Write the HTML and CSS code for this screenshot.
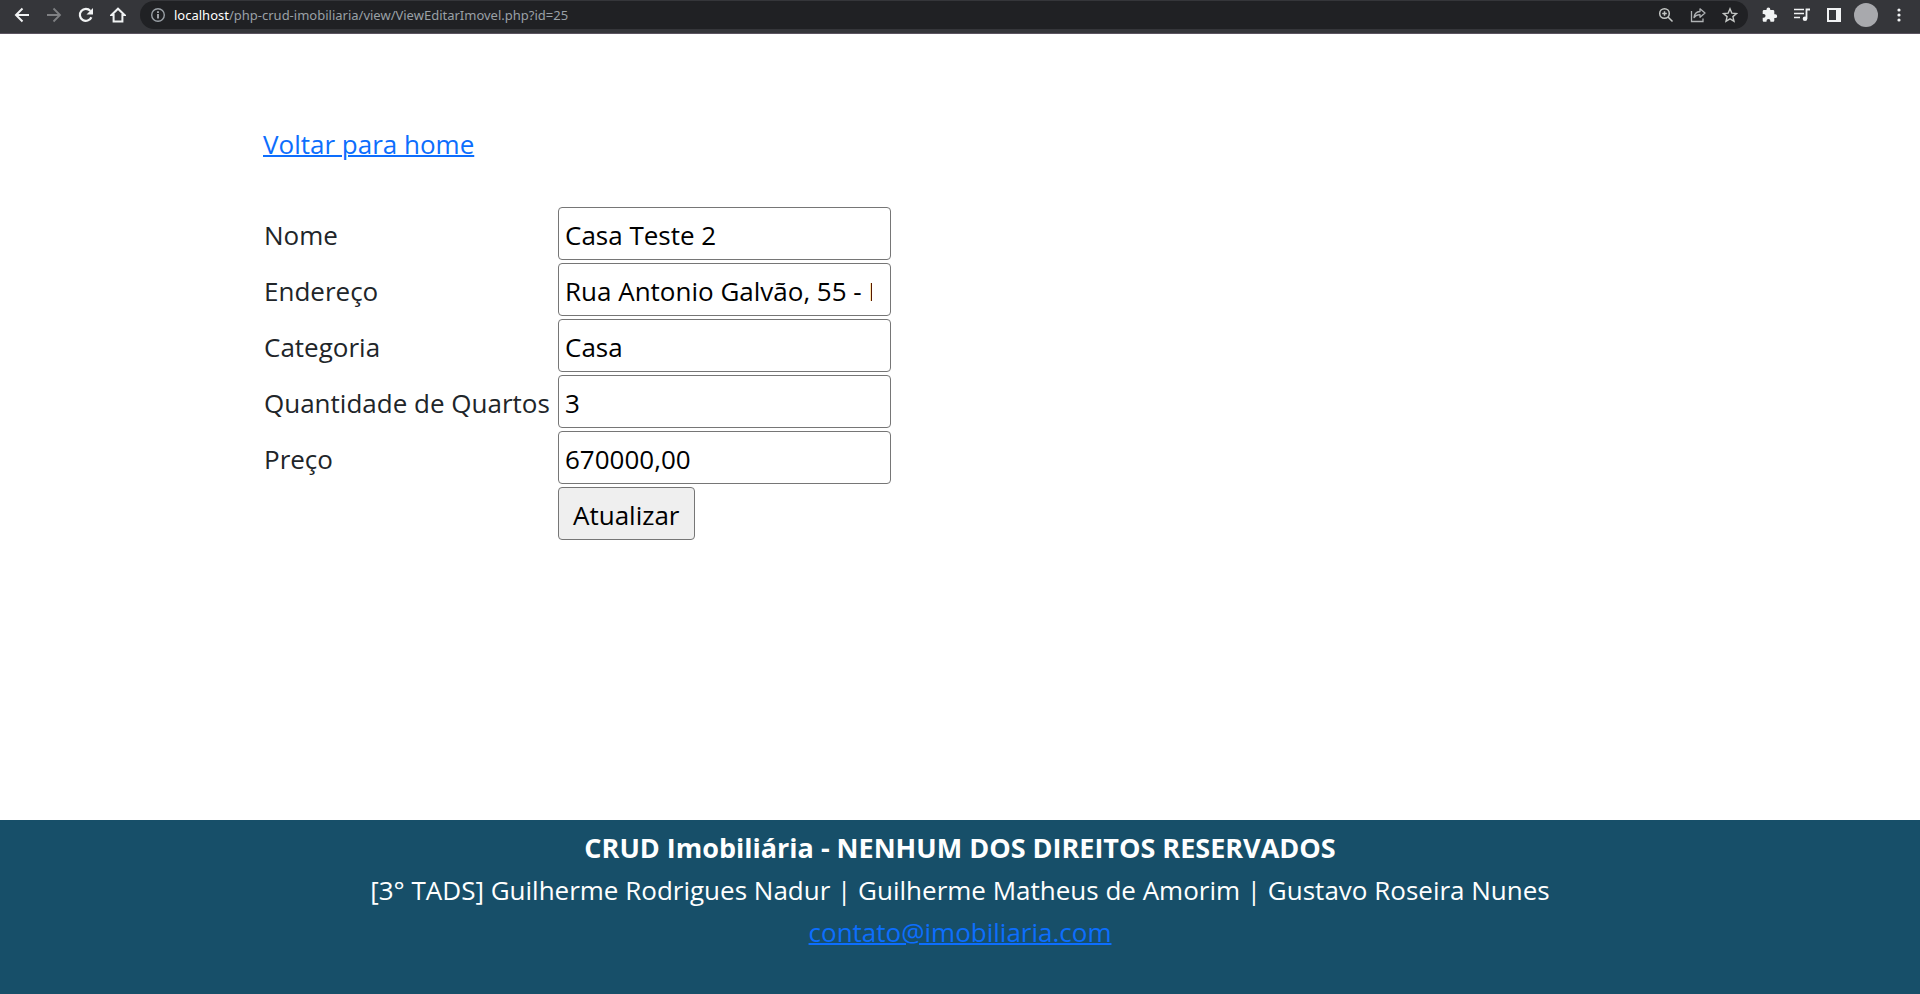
FILE: index.html
```html
<!DOCTYPE html>
<html lang="pt-br">
<head>
<meta charset="utf-8">
<title>Editar Imóvel</title>
<link rel="stylesheet" href="styles.css">
</head>
<body>
<header class="toolbar">
  <nav class="nav-buttons" aria-label="Navegação">
    <button class="tool" type="button" aria-label="Voltar"><svg viewBox="0 0 16 16"><path d="M15 8H2M8.500 1.500L2 8l6.500 6.500" fill="none" stroke="#f1f3f4" stroke-width="2"/></svg></button>
    <button class="tool" type="button" aria-label="Avançar"><svg viewBox="0 0 16 16"><path d="M1 8h13M7.500 1.500L14 8l-6.500 6.500" fill="none" stroke="#7f8083" stroke-width="1.800"/></svg></button>
    <button class="tool" type="button" aria-label="Recarregar"><svg viewBox="0 0 16 16"><path d="M13.400 10.200A6 6 0 1 1 12.400 3.900" fill="none" stroke="#f1f3f4" stroke-width="2.200"/><path d="M15 1v6.500H8.500z" fill="#f1f3f4"/></svg></button>
    <button class="tool" type="button" aria-label="Página inicial"><svg viewBox="0 0 16 16"><path d="M1.500 8L8 1.700 14.500 8H12.400v6.500H3.600V8z" fill="none" stroke="#f1f3f4" stroke-width="2"/></svg></button>
  </nav>
  <div class="address">
    <svg class="info" viewBox="0 0 16 16"><circle cx="8" cy="8" r="6.300" fill="none" stroke="#9aa0a6" stroke-width="1.400"/><path d="M7.200 7h1.600v4.500H7.200zM7.200 4.300h1.600v1.600H7.200z" fill="#bdc1c6"/></svg>
    <span class="url"><span class="host">localhost</span>/php-crud-imobiliaria/view/ViewEditarImovel.php?id=25</span>
    <button class="tool" type="button" aria-label="Zoom"><svg viewBox="0 0 16 16"><circle cx="6.500" cy="6.500" r="4.800" fill="none" stroke="#c4c7c5" stroke-width="1.500"/><path d="M10 10l4.500 4.500M4.200 6.500h4.600M6.500 4.200v4.600" fill="none" stroke="#c4c7c5" stroke-width="1.500"/></svg></button>
    <button class="tool" type="button" aria-label="Compartilhar"><svg viewBox="0 0 16 16"><path d="M1.500 4v10.500h11.500V11.500" fill="none" stroke="#b0b3b5" stroke-width="1.300"/><path d="M4 10.500C4.300 7 6.500 4.800 10 4.500V1.800L15 6l-5 4.200V7.700C7.200 7.700 5.400 8.600 4 10.500z" fill="none" stroke="#b0b3b5" stroke-width="1.300" stroke-linejoin="round"/></svg></button>
    <button class="tool" type="button" aria-label="Favoritar"><svg viewBox="0 0 16 16"><path d="M8 1.800l1.800 4.300 4.700.4-3.600 3.100 1.100 4.600L8 11.800l-4 2.400 1.100-4.600L1.500 6.500l4.700-.4z" fill="none" stroke="#c4c7c5" stroke-width="1.400"/></svg></button>
  </div>
  <div class="extras">
    <button class="tool" type="button" aria-label="Extensões"><svg viewBox="0 0 16 16"><path d="M13.300 7.300h-1V4.500c0-.8-.6-1.400-1.400-1.400H8.300V2.400a1.900 1.900 0 0 0-3.800 0v.7H2c-.7 0-1.300.6-1.300 1.400v2.400h.9a1.900 1.900 0 0 1 0 3.900H.7v2.700c0 .8.600 1.300 1.300 1.300h2.500v-.9a1.900 1.900 0 0 1 3.900 0v.9h2.500c.8 0 1.400-.6 1.400-1.300V11h1a1.850 1.850 0 0 0 0-3.700z" fill="#f1f3f4"/></svg></button>
    <button class="tool" type="button" aria-label="Mídia"><svg viewBox="0 0 16 16"><path d="M0 2.500h10M0 6.500h10M0 10.500h6" fill="none" stroke="#f1f3f4" stroke-width="1.700"/><path d="M16 2.500h-3.500v9" fill="none" stroke="#f1f3f4" stroke-width="1.800"/><circle cx="11" cy="11.800" r="2.300" fill="#f1f3f4"/></svg></button>
    <button class="tool" type="button" aria-label="Painel lateral"><svg viewBox="0 0 16 16"><path d="M1 1h14v14H1zM3 3v10h7V3z" fill="#f1f3f4" fill-rule="evenodd"/></svg></button>
    <button class="avatar" type="button" aria-label="Perfil"></button>
    <button class="tool" type="button" aria-label="Menu"><svg viewBox="0 0 16 16"><g fill="#f1f3f4"><circle cx="8" cy="3" r="1.600"/><circle cx="8" cy="8" r="1.600"/><circle cx="8" cy="13" r="1.600"/></g></svg></button>
  </div>
</header>
<main class="content">
  <a class="link" href="#">Voltar para home</a>
  <form class="form">
    <table class="fields">
      <tr><td class="label"><label for="nome">Nome</label></td><td><input class="field" id="nome" type="text" value="Casa Teste 2"></td></tr>
      <tr><td class="label"><label for="endereco">Endereço</label></td><td><input class="field" id="endereco" type="text" value="Rua Antonio Galvão, 55 - R"></td></tr>
      <tr><td class="label"><label for="categoria">Categoria</label></td><td><input class="field" id="categoria" type="text" value="Casa"></td></tr>
      <tr><td class="label"><label for="quartos">Quantidade de Quartos</label></td><td><input class="field" id="quartos" type="text" value="3"></td></tr>
      <tr><td class="label"><label for="preco">Preço</label></td><td><input class="field" id="preco" type="text" value="670000,00"></td></tr>
      <tr><td></td><td><button class="submit" type="button">Atualizar</button></td></tr>
    </table>
  </form>
</main>
<footer class="footer">
  <strong class="rights">CRUD Imobiliária - NENHUM DOS DIREITOS RESERVADOS</strong>
  <span>[3° TADS] Guilherme Rodrigues Nadur | Guilherme Matheus de Amorim | Gustavo Roseira Nunes</span>
  <a class="link" href="mailto:contato@imobiliaria.com">contato@imobiliaria.com</a>
</footer>
</body>
</html>
```
FILE: styles.css
```css
* { box-sizing: border-box; }
body {
  margin: 0;
  min-height: 100vh;
  display: flex;
  flex-direction: column;
  background: #fff;
  color: #212529;
  font: 26px/42px "Segoe UI", "Open Sans", "Noto Sans", sans-serif;
}
button, input { font: inherit; }

.toolbar {
  display: flex;
  align-items: center;
  height: 34px;
  padding: 0 13px 4px 14px;
  background: #35363a;
  border-bottom: 1px solid #5b5460;
}
.nav-buttons { display: flex; gap: 16px; margin-right: 14px; }
.tool {
  display: flex;
  padding: 0;
  border: 0;
  background: none;
}
.tool svg, .info { display: block; width: 16px; height: 16px; }
.address {
  flex: 1;
  display: flex;
  align-items: center;
  gap: 16px;
  height: 28px;
  padding: 0 10px;
  border-radius: 14px;
  background: #202124;
}
.url {
  flex: 1;
  margin-left: -8px;
  color: #9aa0a6;
  font-family: "Segoe UI", "Noto Sans", sans-serif;
  font-size: 13px;
  line-height: 20px;
}
.host { color: #fff; }
.extras { display: flex; align-items: center; gap: 16px; margin-left: 14px; }
.avatar {
  width: 24px;
  height: 24px;
  margin: 0 -3px 0 -4px;
  padding: 0;
  border: 0;
  border-radius: 50%;
  background: #a8a9ad;
}

.content { flex: 1; padding: 89px 263px 0; }
.link { color: #0d6efd; text-decoration-thickness: 2px; }
.form { margin-top: 41px; }
.fields { border-collapse: collapse; }
.fields td { height: 56px; padding: 1px 2px 2px 1px; }
.fields .label { width: 294px; padding-top: 3px; white-space: nowrap; }
.field, .submit {
  display: block;
  height: 53px;
  border: 1px solid #767676;
  border-radius: 4px;
  color: #000;
}
.field { width: 333px; padding: 4px 18px 2px 6px; background: #fff; }
.submit { padding: 4px 14px 2px; background: #efefef; }

.footer {
  display: flex;
  flex-direction: column;
  align-items: center;
  padding: 7px 16px 41px;
  background: #174f69;
  color: #fff;
}
.rights { font-size: 27px; }
```
